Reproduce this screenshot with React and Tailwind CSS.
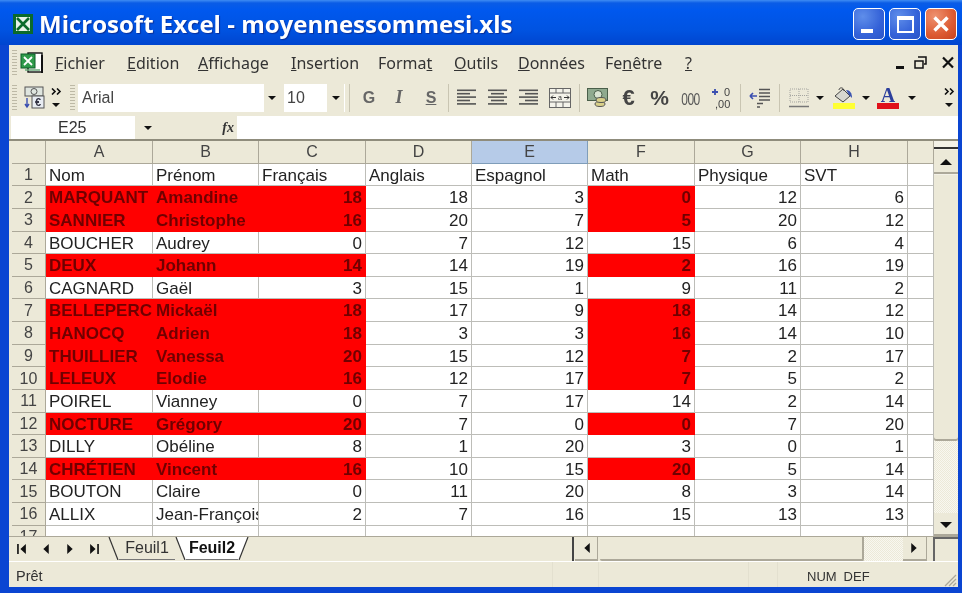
import React from 'react';

const rows = [
  ['Nom', 'Prénom', 'Français', 'Anglais', 'Espagnol', 'Math', 'Physique', 'SVT'],
  ['MARQUANT', 'Amandine', 18, 18, 3, 0, 12, 6],
  ['SANNIER', 'Christophe', 16, 20, 7, 5, 20, 12],
  ['BOUCHER', 'Audrey', 0, 7, 12, 15, 6, 4],
  ['DEUX', 'Johann', 14, 14, 19, 2, 16, 19],
  ['CAGNARD', 'Gaël', 3, 15, 1, 9, 11, 2],
  ['BELLEPERC', 'Mickaël', 18, 17, 9, 18, 14, 12],
  ['HANOCQ', 'Adrien', 18, 3, 3, 16, 14, 10],
  ['THUILLIER', 'Vanessa', 20, 15, 12, 7, 2, 17],
  ['LELEUX', 'Elodie', 16, 12, 17, 7, 5, 2],
  ['POIREL', 'Vianney', 0, 7, 17, 14, 2, 14],
  ['NOCTURE', 'Grégory', 20, 7, 0, 0, 7, 20],
  ['DILLY', 'Obéline', 8, 1, 20, 3, 0, 1],
  ['CHRÉTIEN', 'Vincent', 16, 10, 15, 20, 5, 14],
  ['BOUTON', 'Claire', 0, 11, 20, 8, 3, 14],
  ['ALLIX', 'Jean-François', 2, 7, 16, 15, 13, 13],
];

const redRows = [2, 3, 5, 7, 8, 9, 10, 12, 14];

const Caret = ({ dir = 'down', big = false }) => (
  <svg width={big ? 12 : 8} height={big ? 6 : 4} viewBox="0 0 8 4">
    <polygon points={dir === 'down' ? '0,0 8,0 4,4' : '0,4 8,4 4,0'} fill="#111" />
  </svg>
);

const Grip = ({ className = '' }) => (
  <div className={`h-[26px] w-[5px] bg-[repeating-linear-gradient(to_bottom,#bdb9a6_0_1px,#ece9d8_1px_3px)] ${className}`} />
);

const Sep = ({ className = '' }) => <div className={`h-[28px] w-px bg-[#c9c5b2] ${className}`} />;

const Chevrons = () => (
  <div className="flex flex-col items-center gap-[8px]">
    <svg width="11" height="7" viewBox="0 0 11 7">
      <path d="M1 .5 4 3.5 1 6.500M6 .5 9 3.5 6 6.500" fill="none" stroke="#111" strokeWidth="1.6" />
    </svg>
    <Caret />
  </div>
);

const AlignIcon = ({ kind }) => (
  <svg width="19" height="17" viewBox="0 0 19 17">
    {[0, 1, 2, 3, 4].map((i) => {
      const w = i % 2 ? 13 : 19;
      const x = kind === 'left' ? 0 : kind === 'center' ? (19 - w) / 2 : 19 - w;
      return <rect key={i} x={x} y={i * 3.4 + 0.5} width={w} height="1.6" fill="#555" />;
    })}
  </svg>
);

const SheetNav = ({ kind }) => (
  <svg width="11" height="12" viewBox="0 0 10 11">
    {kind === 'first' && <path d="M1 1h1.500v9H1zM9 1v9L4 5.500z" fill="#111" />}
    {kind === 'prev' && <path d="M8 1v9L3 5.500z" fill="#111" />}
    {kind === 'next' && <path d="M2 1v9l5-4.500z" fill="#111" />}
    {kind === 'last' && <path d="M9 1H7.500v9H9zM1 1v9l5-4.500z" fill="#111" />}
  </svg>
);

const TitleBar = () => (
  <div className="flex h-[45px] shrink-0 items-center bg-[linear-gradient(to_bottom,#3f8cf3_0,#0a5ce6_3px,#0058ee_10px,#0053e1_30px,#0045cf_100%)] pl-[13px] pr-[5px] pt-[3px]">
    <svg width="20" height="20" viewBox="0 0 20 20" className="shrink-0">
      <rect width="20" height="20" fill="#0b6a2c" />
      <rect x="3" y="3" width="14" height="14" fill="#e8f2e8" />
      <path d="M4 4 16 16M16 4 4 16" stroke="#0b6a2c" strokeWidth="2.6" />
    </svg>
    <div className="ml-[6px] flex-1 whitespace-nowrap font-['Open_Sans'] text-[24px] font-bold leading-none text-white [text-shadow:1px_1px_1px_#0a2f9a]">
      Microsoft Excel - moyennessommesi.xls
    </div>
    <div className="flex gap-[4px]">
      <div className="flex h-[32px] w-[32px] items-end rounded-[5px] border border-white bg-[radial-gradient(circle_at_30%_25%,#5f8eea,#3462d8_60%,#2a55c8)] pb-[6px] pl-[7px]">
        <div className="h-[4px] w-[12px] bg-white" />
      </div>
      <div className="flex h-[32px] w-[32px] items-center justify-center rounded-[5px] border border-white bg-[radial-gradient(circle_at_30%_25%,#5f8eea,#3462d8_60%,#2a55c8)]">
        <div className="h-[17px] w-[17px] border-2 border-t-[4px] border-white" />
      </div>
      <div className="flex h-[32px] w-[32px] items-center justify-center rounded-[5px] border border-white bg-[radial-gradient(circle_at_30%_25%,#ee9270,#dc5a32_60%,#c8421e)]">
        <svg width="18" height="18" viewBox="0 0 18 18">
          <path d="M2.500 2.500 15.500 15.500M15.500 2.500 2.500 15.500" stroke="#fff" strokeWidth="3.4" />
        </svg>
      </div>
    </div>
  </div>
);

const MenuBar = () => (
  <div className="flex h-[35px] shrink-0 items-center font-['Noto_Sans'] text-[16px] leading-none text-[#333]">
    <Grip className="ml-[3px]" />
    <svg width="25" height="24" viewBox="0 0 25 24" className="ml-[3px] shrink-0">
      <rect x="8" y="2" width="14" height="19" fill="#fff" stroke="#111" strokeWidth="1.4" />
      <rect x="21" y="4" width="2" height="18" fill="#111" />
      <rect x="1" y="3" width="14" height="14" fill="#2f9a4a" stroke="#0d5f28" />
      <path d="M4 6 12 14M12 6 4 14" stroke="#fff" strokeWidth="1.8" />
      <path d="M5 19h15" stroke="#6aa87a" strokeWidth="1.5" />
    </svg>
    <div className="ml-[10px] w-[72px]"><u>F</u>ichier</div>
    <div className="w-[71px]"><u>E</u>dition</div>
    <div className="w-[93px]"><u>A</u>ffichage</div>
    <div className="w-[87px]"><u>I</u>nsertion</div>
    <div className="w-[76px]">Forma<u>t</u></div>
    <div className="w-[64px]"><u>O</u>utils</div>
    <div className="w-[87px]"><u>D</u>onnées</div>
    <div className="w-[80px]">Fe<u>n</u>être</div>
    <div className="w-[20px]"><u>?</u></div>
    <div className="ml-auto flex items-center gap-[10px] pr-[3px]">
      <div className="mt-[9px] h-[3px] w-[8px] bg-[#111]" />
      <svg width="13" height="13" viewBox="0 0 13 13">
        <path d="M4 1h8v7H10M1 5h8v7H1z" fill="none" stroke="#111" strokeWidth="1.5" />
      </svg>
      <svg width="14" height="13" viewBox="0 0 14 13" className="ml-[4px]">
        <path d="M2 1.500 12 11.500M12 1.500 2 11.500" stroke="#111" strokeWidth="2.2" />
      </svg>
    </div>
  </div>
);

const ToolBar = () => (
  <div className="flex h-[35px] shrink-0 items-center font-['Liberation_Sans'] text-[#444]">
    <Grip className="ml-[3px]" />
    <svg width="22" height="23" viewBox="0 0 22 23" className="ml-[6px] shrink-0">
      <rect x="2" y="1" width="18" height="9" fill="#dfe5df" stroke="#555" />
      <circle cx="11" cy="5.500" r="3" fill="none" stroke="#555" />
      <rect x="9" y="10" width="12" height="12" fill="#e8ecf2" stroke="#555" />
      <text x="15" y="20" textAnchor="middle" fontSize="11" fontWeight="700" fontFamily="Liberation Sans" fill="#334">€</text>
      <path d="M4 12v8M2 18l2 3 2-3" fill="none" stroke="#3b4fb0" strokeWidth="1.4" />
    </svg>
    <div className="ml-[5px] w-[12px]"><Chevrons /></div>
    <Grip className="ml-[8px]" />
    <div className="ml-[3px] flex h-[28px] w-[202px] items-center justify-between bg-white pl-[4px] text-[16px]">
      <span>Arial</span>
      <div className="flex h-full w-[16px] items-center justify-center bg-[#ece9d8]"><Caret /></div>
    </div>
    <div className="ml-[4px] flex h-[28px] w-[61px] items-center justify-between bg-white pl-[3px] text-[16px]">
      <span>10</span>
      <div className="mr-px flex h-full w-[17px] items-center justify-center bg-[#ece9d8]"><Caret /></div>
    </div>
    <Sep className="ml-[4px]" />
    <div className="ml-[4px] flex w-[30px] justify-center text-[16px] font-bold text-[#666]">G</div>
    <div className="flex w-[30px] justify-center font-['Liberation_Serif'] text-[18px] font-bold italic text-[#666]">I</div>
    <div className="flex w-[34px] justify-center text-[16px] font-bold text-[#666] underline">S</div>
    <Sep />
    <div className="ml-[2px] flex w-[31px] justify-center"><AlignIcon kind="left" /></div>
    <div className="flex w-[31px] justify-center"><AlignIcon kind="center" /></div>
    <div className="flex w-[31px] justify-center"><AlignIcon kind="right" /></div>
    <div className="flex w-[32px] justify-center">
      <svg width="22" height="20" viewBox="0 0 22 20">
        <rect x=".5" y=".5" width="21" height="19" fill="#f4f3ea" stroke="#666" />
        <path d="M0 5h22M0 14h22M7 0v5M14 0v5M7 14v6M14 14v6" stroke="#666" />
        <path d="M2 9.500h5M20 9.500h-5M2 9.500l2-2M2 9.500l2 2M20 9.500l-2-2M20 9.500l-2 2" stroke="#333" fill="none" />
        <text x="11" y="12" textAnchor="middle" fontSize="7" fontFamily="Liberation Sans" fill="#333">a</text>
      </svg>
    </div>
    <Sep className="ml-[3px]" />
    <div className="ml-[2px] flex w-[31px] justify-center">
      <svg width="22" height="19" viewBox="0 0 22 19">
        <rect x=".5" y=".5" width="20" height="12" fill="#8faa8f" stroke="#4a5f4a" />
        <circle cx="11" cy="6.500" r="4" fill="#d9e4d2" stroke="#4a5f4a" />
        <ellipse cx="13" cy="16" rx="5" ry="2.500" fill="#d9d089" stroke="#555" />
        <ellipse cx="14" cy="12" rx="5" ry="2.500" fill="#d9d089" stroke="#555" />
      </svg>
    </div>
    <div className="flex w-[31px] justify-center text-[22px] font-bold leading-none text-[#444]">€</div>
    <div className="flex w-[31px] justify-center text-[21px] font-bold leading-none text-[#444]">%</div>
    <div className="flex w-[31px] scale-y-[1.3] justify-center pt-[3px] text-[12px] leading-none tracking-[-0.5px] text-[#555]">000</div>
    <div className="flex w-[32px] justify-center">
      <svg width="24" height="24" viewBox="0 0 24 24">
        <path d="M2 6h6M5 3v6" stroke="#3b4fb0" strokeWidth="1.8" />
        <text x="14" y="10" fontSize="11" fontFamily="Liberation Sans" fill="#444">0</text>
        <text x="5" y="22" fontSize="11" fontFamily="Liberation Sans" fill="#444">,00</text>
      </svg>
    </div>
    <Sep className="ml-[2px]" />
    <div className="ml-[3px] flex w-[32px] justify-center">
      <svg width="22" height="20" viewBox="0 0 22 20">
        <path d="M10 1.500h11M10 5h11M10 8.500h11M10 12h11M8 15.500h6M8 19h3" stroke="#555" strokeWidth="1.5" />
        <path d="M1 8h7M1 8l3-3M1 8l3 3" fill="none" stroke="#3b4fb0" strokeWidth="1.6" />
      </svg>
    </div>
    <Sep className="ml-[3px]" />
    <div className="ml-[5px] flex w-[28px] justify-center">
      <svg width="20" height="20" viewBox="0 0 20 20">
        <path d="M1 1h18v13H1zM10 1v13M1 7.500h18" fill="none" stroke="#a5a5a0" strokeDasharray="1 1" />
        <path d="M0 18.500h20" stroke="#777" strokeWidth="1.5" />
      </svg>
    </div>
    <div className="flex w-[14px] justify-center"><Caret /></div>
    <div className="ml-[2px] flex w-[30px] flex-col items-center">
      <svg width="22" height="16" viewBox="0 0 22 16">
        <path d="M2 9 10 2l7 7-7 6z" fill="#d8d8d0" stroke="#444" />
        <path d="M6 3c0-3 5-3 5 1" fill="none" stroke="#444" />
        <path d="M13 3c4 0 6 3 6 8l-3-3z" fill="#3c55b0" />
      </svg>
      <div className="h-[6px] w-[22px] bg-[#ffff33]" />
    </div>
    <div className="flex w-[14px] justify-center"><Caret /></div>
    <div className="flex w-[30px] flex-col items-center">
      <div className="h-[16px] font-['Liberation_Serif'] text-[20px] font-bold leading-[16px] text-[#2c3f9c]">A</div>
      <div className="h-[6px] w-[22px] bg-[#e0101a]" />
    </div>
    <div className="ml-[2px] flex w-[14px] justify-center"><Caret /></div>
    <div className="ml-[24px] w-[12px]"><Chevrons /></div>
  </div>
);

const FormulaBar = () => (
  <div className="mt-px flex h-[25px] shrink-0 items-stretch border-b-2 border-[#8f8c7c] font-['Liberation_Sans'] text-[16px] text-[#333]">
    <div className="ml-[2px] flex w-[124px] items-center justify-start bg-white pl-[47px]">E25</div>
    <div className="flex w-[26px] items-center justify-center"><Caret /></div>
    <div className="flex w-[76px] items-center justify-end pr-[3px] font-['Liberation_Serif'] text-[14px] font-bold italic">fx</div>
    <div className="flex-1 bg-white" />
  </div>
);

const Sheet = () => {
  const headBase = 'flex items-center justify-center border-r border-b border-[#aca899] bg-[#ece9d8] pt-px text-[16px] text-[#444]';
  const cellBase = 'flex min-w-0 items-center overflow-hidden whitespace-nowrap border-r border-b px-[3px] pt-[2px] text-[17px]';
  const plain = 'border-[#bdbdb8] bg-white text-[#222]';
  const red = 'border-[#ff0000] bg-[#ff0000] font-bold text-[#700000]';

  return (
    <div className="flex min-h-0 flex-1">
      <div className="ml-[3px] min-w-0 flex-1 overflow-hidden">
        <div className="grid auto-rows-[22.64px] grid-cols-[34px_107px_106px_107px_106px_116px_107px_106px_107px_26px] font-['Liberation_Sans']">
          <div className={headBase} />
          {['A', 'B', 'C', 'D'].map((c) => (
            <div key={c} className={headBase}>{c}</div>
          ))}
          <div className="flex items-center justify-center border-r border-b border-[#7f9db9] bg-[#b6cbe8] pt-px text-[16px] text-[#444]">E</div>
          {['F', 'G', 'H', ''].map((c) => (
            <div key={c} className={headBase}>{c}</div>
          ))}
          {rows.map((row, i) => {
            const n = i + 1;
            const isRedRow = redRows.includes(n);
            return (
              <React.Fragment key={n}>
                <div className={headBase}>{n}</div>
                {row.map((v, j) => {
                  const isRed = isRedRow && (j <= 2 || j === 5);
                  const numeric = typeof v === 'number';
                  return (
                    <div
                      key={j}
                      className={`${cellBase} ${isRed ? red : plain} ${numeric ? 'justify-end' : 'justify-start'}`}
                    >
                      {v}
                    </div>
                  );
                })}
                <div className={`${cellBase} ${plain}`} />
              </React.Fragment>
            );
          })}
          <div className={headBase}>17</div>
          {Array.from({ length: 9 }).map((_, j) => (
            <div key={j} className={`${cellBase} ${plain}`} />
          ))}
        </div>
      </div>
      <div className="flex w-[24px] shrink-0 flex-col bg-[#f3f1e7]">
        <div className="mt-[6px] h-[2px] bg-[#333]" />
        <div className="mt-px flex h-[24px] items-center justify-center bg-[#ece9d8] shadow-[inset_0_-2px_0_#aca899]">
          <Caret dir="up" big />
        </div>
        <div className="mt-px h-[266px] rounded-b-[2px] bg-[#ece9d8] shadow-[inset_0_-2px_0_#aca899]" />
        <div className="flex-1 bg-[repeating-conic-gradient(#ece9d8_0_25%,#f8f7f0_0_50%)] bg-[length:2px_2px]" />
        <div className="flex h-[23px] items-center justify-center bg-[#ece9d8] shadow-[inset_0_-2px_0_#aca899]">
          <Caret big />
        </div>
      </div>
    </div>
  );
};

const TabsBar = () => (
  <div className="flex h-[25px] shrink-0 items-stretch border-t border-[#aca899] bg-[#ece9d8] font-['Liberation_Sans'] text-[#333]">
    <div className="flex w-[99px] items-center">
      <div className="flex w-[24px] justify-center"><SheetNav kind="first" /></div>
      <div className="flex w-[25px] justify-center"><SheetNav kind="prev" /></div>
      <div className="flex w-[24px] justify-center"><SheetNav kind="next" /></div>
      <div className="flex w-[25px] justify-center"><SheetNav kind="last" /></div>
    </div>
    <div className="flex h-[23px] items-stretch">
      <svg width="11" height="23" viewBox="0 0 11 23" className="shrink-0">
        <path d="M1 0 10 23" stroke="#333" strokeWidth="1.2" />
      </svg>
      <div className="flex w-[56px] items-center justify-center border-b border-[#777] text-[16px]">Feuil1</div>
      <svg width="11" height="23" viewBox="0 0 11 23" className="shrink-0">
        <polygon points="1,0 11,0 11,23 10,23" fill="#fff" />
        <path d="M1 0 10 23" stroke="#333" strokeWidth="1.2" />
      </svg>
      <div className="flex w-[52px] items-center justify-center border-b border-[#777] bg-white text-[16px] font-bold text-[#111]">Feuil2</div>
      <svg width="11" height="23" viewBox="0 0 11 23" className="shrink-0">
        <polygon points="0,0 10,0 1,23 0,23" fill="#fff" />
        <path d="M10 0 1 23" stroke="#333" strokeWidth="1.2" />
      </svg>
    </div>
    <div className="flex-1" />
    <div className="w-[3px] shrink-0 border-l-2 border-[#444]" />
    <div className="flex w-[23px] shrink-0 items-center justify-center border-r border-b-2 border-[#aca899]"><SheetNav kind="prev" /></div>
    <div className="ml-[2px] w-[264px] shrink-0 rounded-b-[2px] border-r-2 border-b-2 border-[#aca899]" />
    <div className="w-[39px] shrink-0 bg-[repeating-conic-gradient(#ece9d8_0_25%,#f8f7f0_0_50%)] bg-[length:2px_2px]" />
    <div className="flex w-[24px] shrink-0 items-center justify-center border-r border-b-2 border-[#aca899]"><SheetNav kind="next" /></div>
    <div className="ml-[6px] h-full w-[25px] shrink-0 border-t-2 border-l-2 border-[#666]" />
  </div>
);

const StatusBar = () => (
  <div className="flex h-[26px] shrink-0 items-center border-t border-white bg-[#ece9d8] pl-[7px] font-['Liberation_Sans'] text-[14.5px] text-[#333]">
    <div className="w-[536px] pt-[4px]">Prêt</div>
    <div className="h-full w-[46px] border-l border-[#e3e0cf]" />
    <div className="h-full w-[150px] border-l border-[#e3e0cf]" />
    <div className="h-full w-[29px] border-l border-[#e3e0cf]" />
    <div className="flex h-full w-[130px] items-center gap-[7px] border-l border-[#e3e0cf] pl-[29px] pt-[4px] text-[13px]">
      <span>NUM</span>
      <span>DEF</span>
    </div>
    <svg width="14" height="14" viewBox="0 0 14 14" className="ml-auto mr-px mt-[10px]">
      <path d="M13 2 2 13M13 6 6 13M13 10l-3 3" stroke="#aca899" strokeWidth="1.3" />
    </svg>
  </div>
);

export default function App() {
  return (
    <div className="flex h-[593px] w-[962px] flex-col overflow-hidden bg-[#0a45d2] blur-[0.4px]">
      <TitleBar />
      <div className="ml-[9px] mr-[4px] flex min-h-0 flex-1 flex-col bg-[#ece9d8]">
        <MenuBar />
        <ToolBar />
        <FormulaBar />
        <Sheet />
        <TabsBar />
        <StatusBar />
      </div>
      <div className="h-[6px] shrink-0" />
    </div>
  );
}
